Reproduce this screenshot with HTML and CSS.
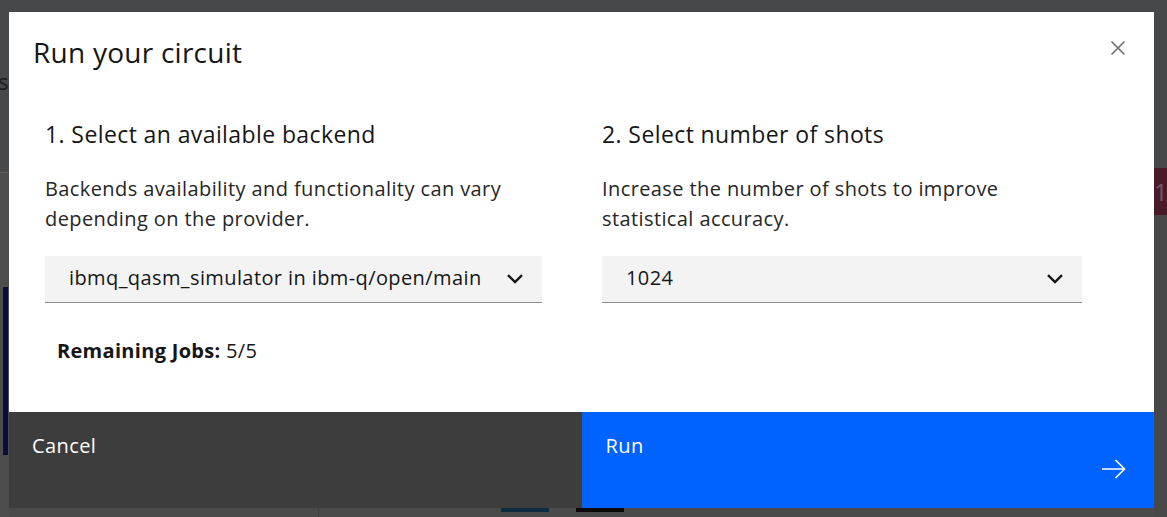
FILE: index.html
```html
<!DOCTYPE html>
<html lang="en">
<head>
<meta charset="utf-8">
<title>Run your circuit</title>
<link rel="stylesheet" href="styles.css">
</head>
<body>
<div class="page">
  <header class="page-header">
    <span class="page-title">s</span>
  </header>
  <div class="page-main">
    <div class="rail-left"><div class="rail-bar"></div></div>
    <div class="page-center">
      <div class="page-bottom">
        <span class="tab tab-blue"></span>
        <span class="tab tab-black"></span>
      </div>
    </div>
    <div class="rail-right"><div class="badge">1</div></div>
  </div>
</div>

<div class="overlay">
  <div class="modal" role="dialog" aria-labelledby="modal-title">
    <div class="modal-header">
      <h2 class="modal-title" id="modal-title">Run your circuit</h2>
      <button class="modal-close" aria-label="Close">
        <svg width="16" height="16" viewBox="0 0 16 16" aria-hidden="true">
          <path d="M1.5 1.5 L14.5 14.5 M14.5 1.5 L1.5 14.5" stroke="#6f6f6f" stroke-width="1.6" fill="none"/>
        </svg>
      </button>
    </div>
    <div class="modal-body">
      <section class="step">
        <h3 class="step-title">1. Select an available backend</h3>
        <p class="step-text">Backends availability and functionality can vary depending on the provider.</p>
        <div class="select">
          <span class="select-value">ibmq_qasm_simulator in ibm-q/open/main</span>
          <svg class="chevron" width="16" height="10" viewBox="0 0 16 10" aria-hidden="true">
            <path d="M1 1.2 L8 8 L15 1.2" stroke="#161616" stroke-width="2.4" fill="none"/>
          </svg>
        </div>
        <p class="jobs"><strong>Remaining Jobs:</strong> 5/5</p>
      </section>
      <section class="step step-right">
        <h3 class="step-title">2. Select number of shots</h3>
        <p class="step-text">Increase the number of shots to improve statistical accuracy.</p>
        <div class="select">
          <span class="select-value">1024</span>
          <svg class="chevron" width="16" height="10" viewBox="0 0 16 10" aria-hidden="true">
            <path d="M1 1.2 L8 8 L15 1.2" stroke="#161616" stroke-width="2.4" fill="none"/>
          </svg>
        </div>
      </section>
    </div>
    <div class="modal-footer">
      <button class="btn btn-secondary">Cancel</button>
      <button class="btn btn-primary">
        <span>Run</span>
        <svg class="btn-icon" width="24" height="20" viewBox="0 0 24 20" aria-hidden="true">
          <path d="M0 10 H22.5 M13.5 1 L22.5 10 L13.5 19" stroke="#ffffff" stroke-width="1.6" fill="none"/>
        </svg>
      </button>
    </div>
  </div>
</div>
</body>
</html>
```

FILE: styles.css
```css
* { box-sizing: border-box; }

html, body {
  margin: 0;
  padding: 0;
}

body {
  width: 1167px;
  height: 517px;
  overflow: hidden;
  background: #4a4a4b;
  font-family: "Open Sans", "Noto Sans", sans-serif;
  color: #161616;
  position: relative;
}

/* underlying page (seen dimmed) */
.page {
  display: flex;
  flex-direction: column;
  height: 517px;
}

.page-header {
  height: 173px;
  border-bottom: 1px solid #5b5b5c;
  background: #474849;
  padding-top: 66px;
}

.page-title {
  display: block;
  margin-left: -2px;
  font-size: 22px;
  color: #1c1c1c;
}

.page-main {
  flex: 1;
  display: flex;
}

.rail-left {
  width: 9px;
  background: #4d4d4e;
  padding-top: 114px;
  padding-left: 3px;
}

.rail-bar {
  width: 5px;
  height: 168px;
  background: #0c0c3a;
}

.page-center {
  flex: 1;
  display: flex;
  flex-direction: column;
  justify-content: flex-end;
}

.page-bottom {
  height: 9px;
  display: flex;
  padding-left: 182px;
  gap: 27px;
  border-left: 1px solid #3e3e3e;
  margin-left: 309px;
}

.tab {
  width: 48px;
  height: 4px;
}

.tab-blue { background: #0f2b40; }
.tab-black { background: #0a0a0a; }

.rail-right {
  width: 13px;
  background: #484849;
}

.badge {
  margin-top: -5px;
  height: 47px;
  background: #4a1a29;
  color: #6d5a60;
  font-size: 24px;
  line-height: 47px;
  text-align: right;
  overflow: hidden;
}

/* modal */
.overlay {
  position: absolute;
  inset: 0;
  padding: 12px 13px 0 9px;
}

.modal {
  width: 1145px;
  background: #ffffff;
  display: flex;
  flex-direction: column;
}

.modal-header {
  display: flex;
  justify-content: space-between;
  align-items: flex-start;
  padding: 22px 28px 0 24px;
}

.modal-title {
  margin: 0;
  font-size: 28px;
  font-weight: 400;
  line-height: 36px;
  letter-spacing: 0.25px;
  color: #161616;
}

.modal-close {
  border: 0;
  background: none;
  padding: 0;
  margin-top: 6px;
  width: 16px;
  height: 16px;
  display: flex;
}

.modal-body {
  display: grid;
  grid-template-columns: 497px 480px;
  column-gap: 60px;
  padding: 49px 0 0 36px;
  height: 342px;
}

.step-title {
  margin: 0;
  font-size: 23px;
  font-weight: 400;
  line-height: 30px;
  letter-spacing: 0.4px;
  color: #161616;
}

.step-text {
  margin: 25px 0 0;
  font-size: 20px;
  line-height: 30px;
  letter-spacing: 0.4px;
  color: #262626;
}

.select {
  margin-top: 22px;
  height: 47px;
  background: #f3f3f3;
  border-bottom: 1px solid #8d8d8d;
  display: flex;
  align-items: center;
  justify-content: space-between;
  padding: 0 19px 2px 24px;
}

.select-value {
  font-size: 20px;
  line-height: 24px;
  letter-spacing: 0.4px;
  color: #161616;
}

.chevron {
  margin-top: 1px;
}

.jobs {
  margin: 34px 0 0 12px;
  font-size: 20px;
  line-height: 28px;
  letter-spacing: 0.3px;
  color: #161616;
}

.jobs strong {
  font-weight: 700;
}

.modal-footer {
  display: grid;
  grid-template-columns: 1fr 1fr;
  height: 96px;
}

.btn {
  border: 0;
  margin: 0;
  font-family: inherit;
  font-size: 20px;
  line-height: 26px;
  letter-spacing: 0.4px;
  text-align: left;
  color: #ffffff;
  display: flex;
  flex-direction: column;
  justify-content: space-between;
  padding: 21px 24px 29px 23px;
}

.btn-secondary { background: #3d3d3d; }

.btn-primary {
  background: #0062ff;
  padding-left: 24px;
  padding-right: 28px;
}

.btn-icon {
  align-self: flex-end;
}
```
